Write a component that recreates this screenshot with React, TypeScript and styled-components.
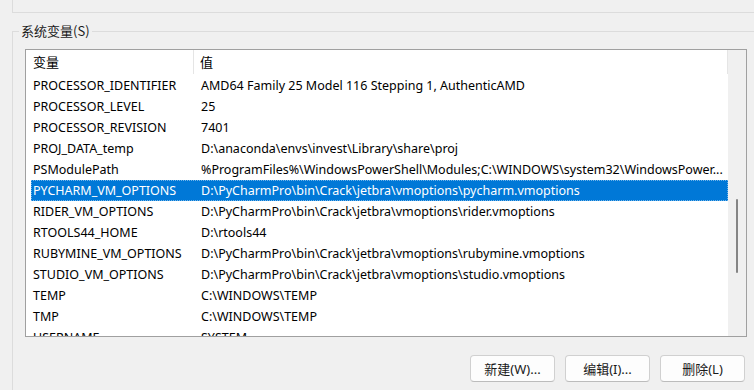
import React from 'react';
import styled, {createGlobalStyle} from 'styled-components';

const GlobalStyle = createGlobalStyle`
  html, body {
    margin: 0;
    padding: 0;
    background: #f0f0f0;
    overflow: hidden;
  }
  body {
    font-family: "Noto Sans", "Noto Sans CJK SC", sans-serif;
    font-size: 13px;
    color: #000;
  }
`

type VarRow = {
    name: string
    value: string
}

const rows: VarRow[] = [
    {name: 'PROCESSOR_IDENTIFIER', value: 'AMD64 Family 25 Model 116 Stepping 1, AuthenticAMD'},
    {name: 'PROCESSOR_LEVEL', value: '25'},
    {name: 'PROCESSOR_REVISION', value: '7401'},
    {name: 'PROJ_DATA_temp', value: 'D:\\anaconda\\envs\\invest\\Library\\share\\proj'},
    {name: 'PSModulePath', value: '%ProgramFiles%\\WindowsPowerShell\\Modules;C:\\WINDOWS\\system32\\WindowsPower...'},
    {name: 'PYCHARM_VM_OPTIONS', value: 'D:\\PyCharmPro\\bin\\Crack\\jetbra\\vmoptions\\pycharm.vmoptions'},
    {name: 'RIDER_VM_OPTIONS', value: 'D:\\PyCharmPro\\bin\\Crack\\jetbra\\vmoptions\\rider.vmoptions'},
    {name: 'RTOOLS44_HOME', value: 'D:\\rtools44'},
    {name: 'RUBYMINE_VM_OPTIONS', value: 'D:\\PyCharmPro\\bin\\Crack\\jetbra\\vmoptions\\rubymine.vmoptions'},
    {name: 'STUDIO_VM_OPTIONS', value: 'D:\\PyCharmPro\\bin\\Crack\\jetbra\\vmoptions\\studio.vmoptions'},
    {name: 'TEMP', value: 'C:\\WINDOWS\\TEMP'},
    {name: 'TMP', value: 'C:\\WINDOWS\\TEMP'},
    {name: 'USERNAME', value: 'SYSTEM'},
]

const SELECTED = 'PYCHARM_VM_OPTIONS'

export default function App() {
    return (
        <>
            <GlobalStyle/>
            <Page>
                <PrevGroup/>
                <Group>
                    <Legend>系统变量(S)</Legend>
                    <ListBox>
                        <ListContent>
                            <Header>
                                <HeaderCell>变量</HeaderCell>
                                <HeaderCell>值</HeaderCell>
                            </Header>
                            <Rows>
                                {rows.map(r => (
                                    <Row key={r.name} selected={r.name === SELECTED}>
                                        <Cell>{r.name}</Cell>
                                        <Cell>{r.value}</Cell>
                                    </Row>
                                ))}
                            </Rows>
                        </ListContent>
                        <ScrollTrack>
                            <Thumb/>
                        </ScrollTrack>
                    </ListBox>
                    <ButtonBar>
                        <Button>新建(W)...</Button>
                        <Button>编辑(I)...</Button>
                        <Button>删除(L)</Button>
                    </ButtonBar>
                </Group>
            </Page>
        </>
    );
}

const Page = styled.div`
  width: 780px;
  height: 390px;
  display: flex;
  flex-direction: column;
`
const PrevGroup = styled.div`
  margin-left: 12px;
  height: 12px;
  border-left: 1px solid #dcdcdc;
  border-bottom: 1px solid #dcdcdc;
`
const Group = styled.fieldset`
  margin: 9px 0 0 12px;
  padding: 0;
  min-width: 0;
  flex: 1;
  border: 1px solid #dcdcdc;
  border-right: none;
  border-bottom: none;
`
const Legend = styled.legend`
  margin-left: 6px;
  padding: 0 2px;
  font-family: "Noto Sans CJK SC", sans-serif;
  font-size: 13px;
  line-height: 18px;
  color: #1a1a1a;
`
const ListBox = styled.div`
  margin: 9px 0 0 12px;
  width: 720px;
  height: 286px;
  border: 1px solid #a0a0a0;
  background: #fff;
  display: flex;
  overflow: hidden;
`
const ListContent = styled.div`
  flex: 1;
  display: flex;
  flex-direction: column;
  overflow: hidden;
`
const Header = styled.div`
  height: 24px;
  display: grid;
  grid-template-columns: 168px 1fr;
  flex-shrink: 0;
`
const HeaderCell = styled.div`
  display: flex;
  align-items: center;
  padding-left: 7px;
  padding-bottom: 1px;
  border-right: 1px solid #e5e5e5;
  font-family: "Noto Sans CJK SC", sans-serif;

  &:last-child {
    padding-left: 6px;
  }
`
const Rows = styled.div`
  padding-top: 1px;
  display: flex;
  flex-direction: column;
`
const Row = styled.div<{ selected?: boolean }>`
  margin-left: 5px;
  height: 21px;
  flex-shrink: 0;
  display: grid;
  grid-template-columns: 168px 1fr;
  align-items: center;
  background: ${props => props.selected ? '#0078d7' : 'transparent'};
  color: ${props => props.selected ? '#fff' : '#000'};
  outline: ${props => props.selected ? '1px dotted rgba(255, 255, 255, 0.45)' : 'none'};
  outline-offset: -1px;
`
const Cell = styled.div`
  padding-left: 2px;
  white-space: nowrap;
  overflow: hidden;
  font-size: 12.5px;
  line-height: 21px;
`
const ScrollTrack = styled.div`
  width: 18px;
  flex-shrink: 0;
  background: #f0f0f0;
  display: flex;
  justify-content: center;
  padding-top: 149px;
  box-sizing: border-box;
`
const Thumb = styled.div`
  width: 2px;
  height: 74px;
  border-radius: 1px;
  background: #858585;
`
const ButtonBar = styled.div`
  width: 722px;
  margin: 18px 0 0 12px;
  display: flex;
  justify-content: flex-end;
  gap: 10px;
  padding-right: 2px;
  box-sizing: border-box;
`
const Button = styled.button`
  width: 85px;
  height: 27px;
  border: 1px solid #d0d0d0;
  border-bottom-color: #bcbcbc;
  border-radius: 4px;
  background: #fdfdfd;
  font-family: "Noto Sans", "Noto Sans CJK SC", sans-serif;
  font-size: 13px;
  color: #1a1a1a;
  padding: 0;
`
